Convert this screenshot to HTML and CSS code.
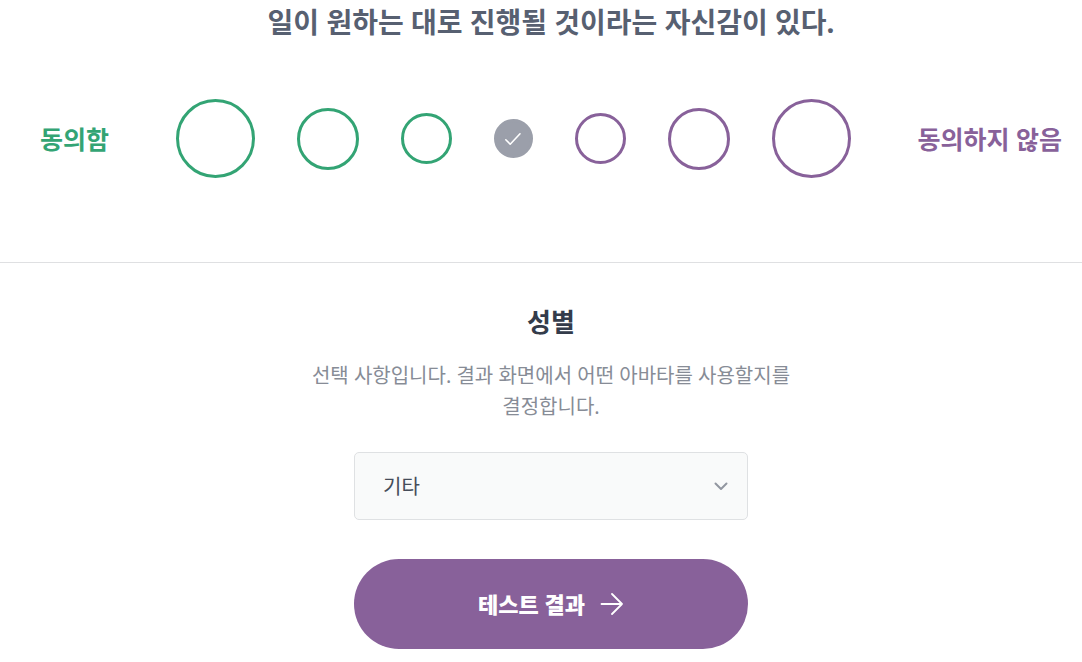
FILE: index.html
```html
<!DOCTYPE html>
<html lang="ko">
  <head>
    <meta charset="UTF-8" />
    <meta name="viewport" content="width=device-width, initial-scale=1" />
    <title>성격 유형 검사</title>
    <link rel="stylesheet" href="styles.css" />
  </head>

  <body>
    <form class="quiz">
      <!-- question -->
      <fieldset class="question">
        <legend class="statement">일이 원하는 대로 진행될 것이라는 자신감이 있다.</legend>
        <div class="decision">
          <span class="caption agree">동의함</span>
          <div class="options">
            <input type="radio" name="q1" value="3" class="option agree max" aria-label="매우 동의" />
            <input type="radio" name="q1" value="2" class="option agree med" aria-label="동의" />
            <input type="radio" name="q1" value="1" class="option agree min" aria-label="약간 동의" />
            <label class="neutral">
              <input type="radio" name="q1" value="0" class="option" aria-label="중립" checked />
              <svg class="check" viewBox="0 0 18 14" aria-hidden="true">
                <path d="M1.8 7.8l4.4 4.4L16 1.8" />
              </svg>
            </label>
            <input type="radio" name="q1" value="-1" class="option disagree min" aria-label="약간 비동의" />
            <input type="radio" name="q1" value="-2" class="option disagree med" aria-label="비동의" />
            <input type="radio" name="q1" value="-3" class="option disagree max" aria-label="매우 비동의" />
          </div>
          <span class="caption disagree">동의하지 않음</span>
        </div>
      </fieldset>

      <!-- gender -->
      <section class="gender">
        <label class="title" for="gender">성별</label>
        <p class="hint">선택 사항입니다. 결과 화면에서 어떤 아바타를 사용할지를 결정합니다.</p>
        <div class="select-wrap">
          <select id="gender">
            <option>남성</option>
            <option>여성</option>
            <option selected>기타</option>
          </select>
          <svg class="chevron" viewBox="0 0 14 9" aria-hidden="true">
            <path d="M1.5 1.5L7 7l5.500-5.500" />
          </svg>
        </div>
        <button type="submit" class="submit">
          <span>테스트 결과</span>
          <svg class="arrow" viewBox="0 0 24 22" aria-hidden="true">
            <path d="M1.500 11H22M12 1l10 10-10 10" />
          </svg>
        </button>
      </section>
    </form>
  </body>
</html>
```

FILE: styles.css
```css
* {
  box-sizing: border-box;
  margin: 0;
  padding: 0;
}

body {
  background: #fff;
  color: #343c4b;
  font-family: "Noto Sans", "Noto Sans CJK KR", sans-serif;
}

/* question */
.question {
  border: 0;
  border-bottom: 1px solid #dfe0e2;
  padding-bottom: 84px;
}

.statement {
  width: 100%;
  padding-left: 20px;
  color: #576071;
  font-size: 28px;
  font-weight: 700;
  line-height: 44px;
  text-align: center;
}

.decision {
  display: flex;
  align-items: center;
  justify-content: space-between;
  margin-top: 55px;
  padding: 0 20px 0 40px;
}

.caption {
  font-size: 25px;
  font-weight: 700;
  line-height: 36px;
}

.caption.agree {
  color: #33a474;
}

.caption.disagree {
  color: #88619a;
}

.options {
  display: flex;
  align-items: center;
  gap: 42px;
}

.option {
  display: block;
  appearance: none;
  border: 3px solid;
  border-radius: 50%;
  cursor: pointer;
}

.option.agree {
  border-color: #33a474;
}

.option.disagree {
  border-color: #88619a;
}

.option.max {
  width: 79px;
  height: 79px;
}

.option.med {
  width: 62px;
  height: 62px;
}

.option.min {
  width: 51px;
  height: 51px;
}

.neutral {
  display: grid;
  place-items: center;
}

.neutral > * {
  grid-area: 1 / 1;
}

.neutral .option {
  width: 39px;
  height: 39px;
  border-color: #9b9faa;
  background: #9b9faa;
}

svg {
  fill: none;
  stroke-linecap: round;
  stroke-linejoin: round;
}

.check {
  width: 18px;
  height: 14px;
  stroke: #fff;
  stroke-width: 1.6;
  pointer-events: none;
}

/* gender */
.gender {
  display: flex;
  flex-direction: column;
  align-items: center;
  padding: 39px 0 13px 20px;
}

.title {
  font-size: 26px;
  font-weight: 700;
  line-height: 40px;
}

.hint {
  max-width: 500px;
  margin: 18px 0 30px;
  color: #878c96;
  font-size: 20px;
  line-height: 31px;
  text-align: center;
  word-break: keep-all;
}

.select-wrap {
  display: grid;
  align-items: center;
  width: 100%;
  max-width: 394px;
}

.select-wrap > * {
  grid-area: 1 / 1;
}

select {
  appearance: none;
  width: 100%;
  height: 68px;
  padding: 0 28px;
  border: 1px solid #dfe1e3;
  border-radius: 5px;
  background: #f9fafa;
  color: #454c59;
  font: inherit;
  font-size: 20px;
}

.chevron {
  justify-self: end;
  width: 14px;
  height: 9px;
  margin-right: 20px;
  stroke: #9296a0;
  stroke-width: 2;
  pointer-events: none;
}

.submit {
  display: flex;
  align-items: center;
  justify-content: center;
  gap: 15px;
  width: 100%;
  max-width: 394px;
  height: 90px;
  margin-top: 39px;
  border: 0;
  border-radius: 45px;
  background: #88619a;
  color: #fff;
  font: inherit;
  font-size: 22px;
  font-weight: 900;
  line-height: 32px;
  cursor: pointer;
}

.arrow {
  width: 24px;
  height: 22px;
  stroke: #fff;
  stroke-width: 1.8;
}
```
